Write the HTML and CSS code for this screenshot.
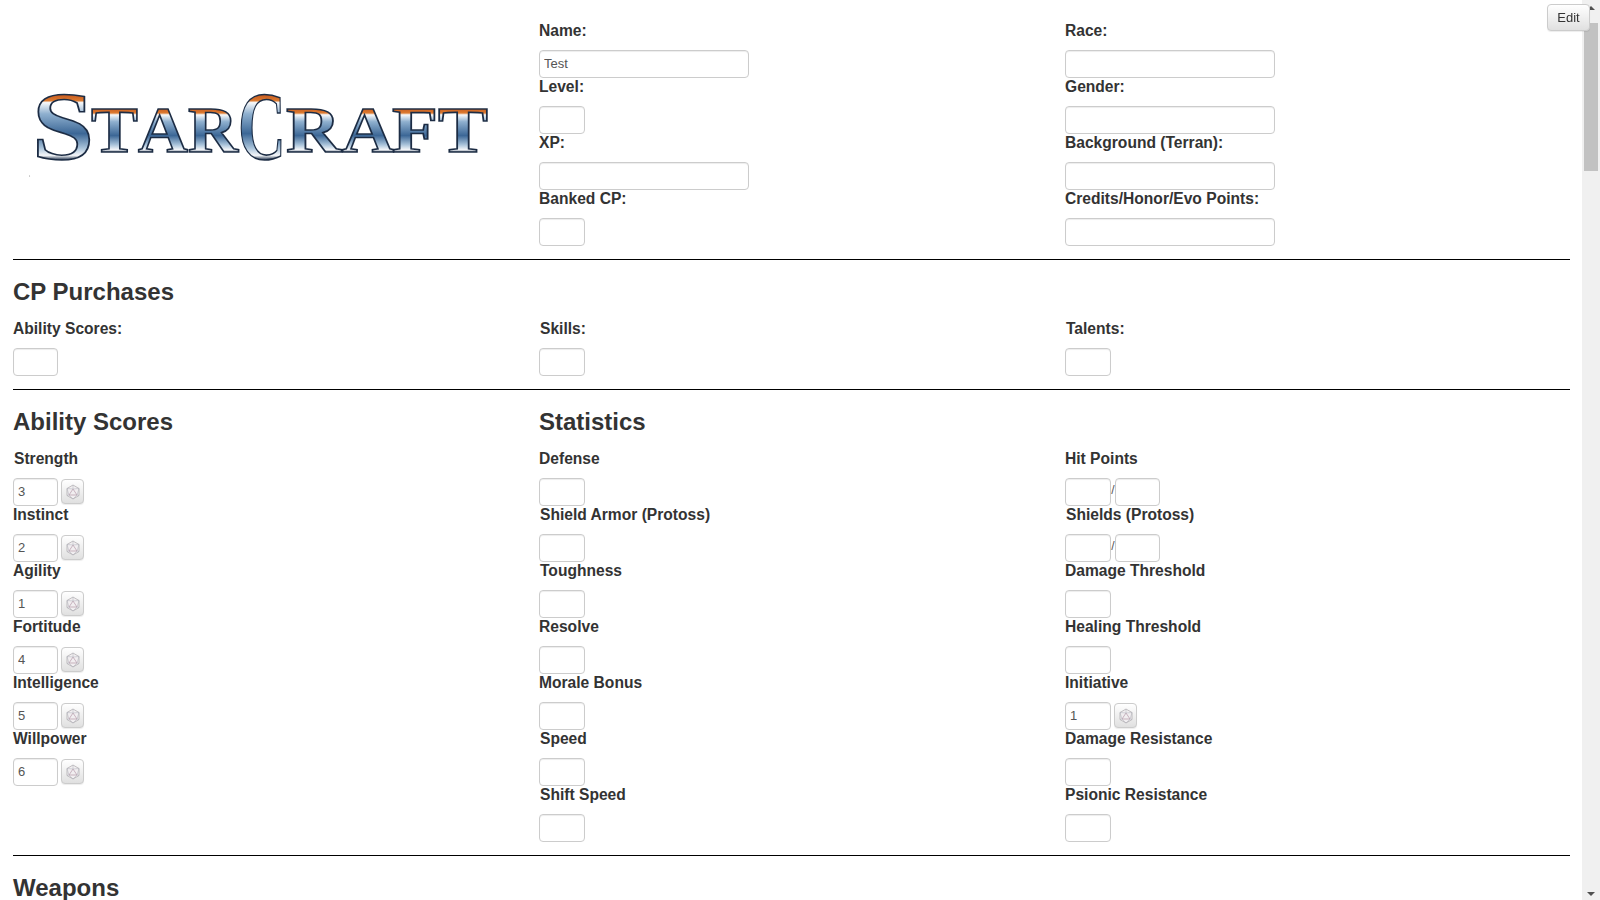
FILE: index.html
```html
<!DOCTYPE html>
<html lang="en">
<head>
    <meta charset="UTF-8">
    <title>StarCraft Character Sheet</title>
    <link rel="stylesheet" href="styles.css">
</head>
<body>
    <svg width="0" height="0" class="defs">
        <defs>
            <linearGradient id="metal-big" gradientUnits="userSpaceOnUse" x1="0" y1="4" x2="0" y2="70">
                <stop offset="0" stop-color="#c4551c"/>
                <stop offset="0.1" stop-color="#dc7a30"/>
                <stop offset="0.13" stop-color="#f7f9fb"/>
                <stop offset="0.3" stop-color="#8fb0cf"/>
                <stop offset="0.6" stop-color="#3c6796"/>
                <stop offset="0.82" stop-color="#a9c3da"/>
                <stop offset="0.93" stop-color="#f4f6f9"/>
                <stop offset="1" stop-color="#22354f"/>
            </linearGradient>
            <linearGradient id="metal-small" gradientUnits="userSpaceOnUse" x1="0" y1="17" x2="0" y2="63">
                <stop offset="0" stop-color="#c4551c"/>
                <stop offset="0.13" stop-color="#dc7a30"/>
                <stop offset="0.17" stop-color="#f7f9fb"/>
                <stop offset="0.32" stop-color="#8fb0cf"/>
                <stop offset="0.62" stop-color="#3c6796"/>
                <stop offset="0.82" stop-color="#a9c3da"/>
                <stop offset="0.93" stop-color="#f4f6f9"/>
                <stop offset="1" stop-color="#22354f"/>
            </linearGradient>
            <symbol id="die" viewBox="0 0 16 16">
                <path d="M8 1 14 4.5V11.5L8 15 2 11.5V4.5Z" fill="#f1eef0" stroke="#aaa7aa" stroke-width=".7"/>
                <path d="M8 5 12 11H4Z" fill="none" stroke="#b498a8" stroke-width=".7"/>
                <path d="M8 1 8 5M2 4.5 8 5 14 4.5M2 11.5 4 11M14 11.5 12 11M8 15 4 11M8 15 12 11M2 4.5 4 11M14 4.5 12 11" fill="none" stroke="#aeb0bb" stroke-width=".5"/>
            </symbol>
        </defs>
    </svg>

    <button class="btn edit-btn">Edit</button>

    <div class="sheet">
        <div class="row top-row">
            <div class="logo-cell">
                <svg class="logo" width="490" height="100" viewBox="0 0 490 100">
                    <text class="logo-text"><tspan class="big" x="3" y="69" textLength="62" lengthAdjust="spacingAndGlyphs">S</tspan><tspan class="small" x="62" y="62" textLength="47" lengthAdjust="spacingAndGlyphs">T</tspan><tspan class="small" x="109" y="62" textLength="50" lengthAdjust="spacingAndGlyphs">A</tspan><tspan class="small" x="159" y="62" textLength="50" lengthAdjust="spacingAndGlyphs">R</tspan><tspan class="big" x="209" y="69" textLength="48" lengthAdjust="spacingAndGlyphs">C</tspan><tspan class="small" x="257" y="62" textLength="55" lengthAdjust="spacingAndGlyphs">R</tspan><tspan class="small" x="313" y="62" textLength="52" lengthAdjust="spacingAndGlyphs">A</tspan><tspan class="small" x="363" y="62" textLength="46" lengthAdjust="spacingAndGlyphs">F</tspan><tspan class="small" x="409" y="62" textLength="50" lengthAdjust="spacingAndGlyphs">T</tspan></text>
                    <circle cx="0.5" cy="86" r="0.6" fill="#999"/>
                </svg>
            </div>
            <div>
                <div class="field"><label>Name:</label><input class="wide" value="Test"></div>
                <div class="field"><label>Level:</label><input class="num"></div>
                <div class="field"><label>XP:</label><input class="wide"></div>
                <div class="field"><label>Banked CP:</label><input class="num"></div>
            </div>
            <div>
                <div class="field"><label>Race:</label><input class="wide"></div>
                <div class="field"><label>Gender:</label><input class="wide"></div>
                <div class="field"><label>Background (Terran):</label><input class="wide"></div>
                <div class="field"><label>Credits/Honor/Evo Points:</label><input class="wide"></div>
            </div>
        </div>
        <hr>

        <h3>CP Purchases</h3>
        <div class="row">
            <div class="field"><label>Ability Scores:</label><input class="num first"></div>
            <div class="field"><label class="nudge">Skills:</label><input class="num"></div>
            <div class="field"><label class="nudge">Talents:</label><input class="num"></div>
        </div>
        <hr>

        <div class="row stats-row">
            <div>
                <h3>Ability Scores</h3>
                <div class="field"><label class="nudge">Strength</label><div class="controls"><input class="num first" value="3"><button class="btn die-btn"><svg width="16" height="16"><use href="#die"/></svg></button></div></div>
                <div class="field"><label>Instinct</label><div class="controls"><input class="num first" value="2"><button class="btn die-btn"><svg width="16" height="16"><use href="#die"/></svg></button></div></div>
                <div class="field"><label>Agility</label><div class="controls"><input class="num first" value="1"><button class="btn die-btn"><svg width="16" height="16"><use href="#die"/></svg></button></div></div>
                <div class="field"><label>Fortitude</label><div class="controls"><input class="num first" value="4"><button class="btn die-btn"><svg width="16" height="16"><use href="#die"/></svg></button></div></div>
                <div class="field"><label>Intelligence</label><div class="controls"><input class="num first" value="5"><button class="btn die-btn"><svg width="16" height="16"><use href="#die"/></svg></button></div></div>
                <div class="field"><label>Willpower</label><div class="controls"><input class="num first" value="6"><button class="btn die-btn"><svg width="16" height="16"><use href="#die"/></svg></button></div></div>
            </div>
            <div>
                <h3>Statistics</h3>
                <div class="field"><label>Defense</label><input class="num"></div>
                <div class="field"><label class="nudge">Shield Armor (Protoss)</label><input class="num"></div>
                <div class="field"><label class="nudge">Toughness</label><input class="num"></div>
                <div class="field"><label>Resolve</label><input class="num"></div>
                <div class="field"><label>Morale Bonus</label><input class="num"></div>
                <div class="field"><label class="nudge">Speed</label><input class="num"></div>
                <div class="field"><label class="nudge">Shift Speed</label><input class="num"></div>
            </div>
            <div class="no-heading">
                <div class="field"><label>Hit Points</label><div class="controls pair"><input class="num"><span class="slash">/</span><input class="num"></div></div>
                <div class="field"><label class="nudge">Shields (Protoss)</label><div class="controls pair"><input class="num"><span class="slash">/</span><input class="num"></div></div>
                <div class="field"><label>Damage Threshold</label><input class="num"></div>
                <div class="field"><label>Healing Threshold</label><input class="num"></div>
                <div class="field"><label>Initiative</label><div class="controls"><input class="num" value="1"><button class="btn die-btn"><svg width="16" height="16"><use href="#die"/></svg></button></div></div>
                <div class="field"><label>Damage Resistance</label><input class="num"></div>
                <div class="field"><label>Psionic Resistance</label><input class="num"></div>
            </div>
        </div>
        <hr>

        <h3>Weapons</h3>
    </div>

    <div class="scrollbar">
        <div class="arrow-up"></div>
        <div class="thumb"></div>
        <div class="arrow-down"></div>
    </div>
</body>
</html>
```

FILE: styles.css
```css
html, body {
    height: 100%;
    overflow: hidden;
}
body {
    margin: 0;
    font-family: "Liberation Sans", Arial, sans-serif;
    font-size: 14px;
    color: #333;
    background-color: #fff;
}
.defs {
    position: absolute;
}
.sheet {
    width: 1557px;
    padding: 0 13px;
}
.row {
    display: grid;
    grid-template-columns: repeat(3, 526px);
}
.top-row {
    padding-top: 22px;
}
.logo-cell {
    padding-top: 68px;
    padding-left: 16px;
}
.logo {
    display: block;
}
.logo-text {
    font-family: "Liberation Serif", serif;
    font-weight: bold;
    stroke: #1c2c44;
    stroke-width: 1.6;
}
.logo-text .big {
    font-size: 98px;
    fill: url(#metal-big);
}
.logo-text .small {
    font-size: 66px;
    fill: url(#metal-small);
}
.field label {
    display: block;
    height: 20px;
    line-height: 18px;
    margin-bottom: 8px;
    font-size: 15.6px;
    font-weight: bold;
}
.field label.nudge {
    padding-left: 1px;
}
.field input {
    display: block;
    box-sizing: border-box;
    height: 28px;
    padding: 0 4px 2px;
    font-family: inherit;
    font-size: 13px;
    color: #555;
    border: 1px solid #ccc;
    border-radius: 4px;
    box-shadow: inset 0 1px 1px rgba(0,0,0,.075);
    background-color: #fff;
}
.field input.wide {
    width: 210px;
}
.field input.num {
    width: 46px;
}
.field input.first, .field .pair input:last-child {
    width: 45px;
}
.controls {
    display: flex;
    align-items: flex-start;
    height: 28px;
}
.slash {
    width: 4px;
    padding-top: 5px;
    font-size: 12px;
    color: #555;
    text-align: center;
}
.btn {
    background-image: linear-gradient(to bottom, #fff 0, #e0e0e0 100%);
    border: 1px solid #ccc;
    border-radius: 4px;
    box-shadow: inset 0 1px 0 rgba(255,255,255,.15), 0 1px 1px rgba(0,0,0,.075);
    padding: 0;
}
.die-btn {
    display: flex;
    align-items: center;
    justify-content: center;
    box-sizing: border-box;
    width: 23px;
    height: 25px;
    margin-top: 1px;
    margin-left: 3px;
}
.edit-btn {
    position: absolute;
    top: 4px;
    left: 1547px;
    z-index: 2;
    width: 43px;
    height: 27px;
    font-family: inherit;
    font-size: 13px;
    color: #333;
}
hr {
    margin: 13px 0 0;
    border: 0;
    border-top: 1px solid #000;
}
h3 {
    margin: 0;
    font-size: 24px;
    line-height: 26px;
    font-weight: bold;
    color: #333;
}
.sheet > h3 {
    padding-top: 19px;
    padding-bottom: 15px;
}
.stats-row {
    padding-top: 19px;
}
.stats-row h3 {
    margin-bottom: 15px;
}
.no-heading {
    padding-top: 41px;
}
.scrollbar {
    position: fixed;
    top: 0;
    right: 0;
    width: 18px;
    height: 900px;
    background-color: #f0f0f0;
}
.thumb {
    position: absolute;
    top: 23px;
    left: 2px;
    width: 14px;
    height: 148px;
    background-color: #c2c2c2;
}
.arrow-up, .arrow-down {
    position: absolute;
    left: 5px;
    width: 0;
    height: 0;
    border-left: 4px solid transparent;
    border-right: 4px solid transparent;
}
.arrow-up {
    top: 6px;
    border-bottom: 4px solid #505050;
}
.arrow-down {
    bottom: 4px;
    border-top: 4px solid #505050;
}
```
